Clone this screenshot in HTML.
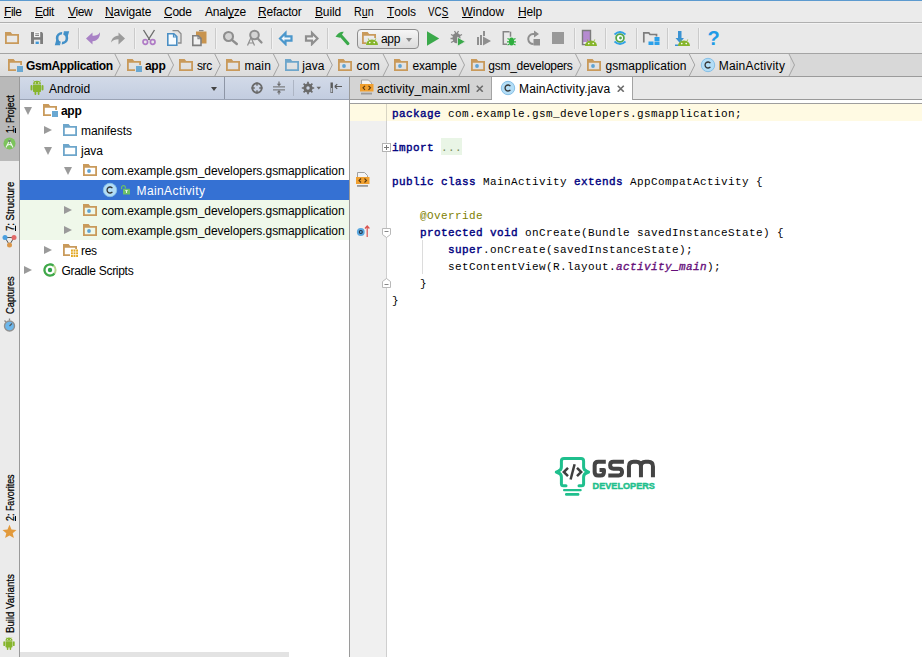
<!DOCTYPE html>
<html><head><meta charset="utf-8"><title>GsmApplication - Android Studio</title>
<style>
*{box-sizing:border-box;margin:0;padding:0}
html,body{width:922px;height:657px;overflow:hidden;background:#fff}
body{position:relative;font-family:"Liberation Sans",sans-serif;font-size:12px;color:#000}
.a{position:absolute}
.t{position:absolute;white-space:pre;line-height:14px;height:14px}
u{text-decoration:none;border-bottom:1px solid #000;display:inline-block;line-height:12px;height:12px}
#menubar{left:0;top:0;width:922px;height:23px;background:#ebebeb;border-top:1px solid #5c9acf;border-bottom:1px solid #b0b0b0}
#toolbar{left:0;top:23px;width:922px;height:31px;background:#e9e9e9;border-top:1px solid #f3f3f3;border-bottom:1px solid #a4a4a4}
.sep{position:absolute;top:28px;width:1px;height:21px;background:#cbcbcb;box-shadow:1px 0 0 #f2f2f2}
#navbar{left:0;top:54px;width:922px;height:23px;background:#d8d8d8;border-bottom:1px solid #9b9b9b}
#crumbs{left:0;top:0;width:790px;height:22px;background:linear-gradient(#e8e8e8,#dcdcdc)}
#strip{left:0;top:77px;width:20px;height:580px;background:#ebebeb;border-right:1px solid #9a9a9a}
#strip .act{left:0;top:0;width:19px;height:84px;background:#b9b9b9}
.vt{position:absolute;white-space:pre;font-size:11px;line-height:12px;height:12px;transform-origin:0 0;color:#000;-webkit-text-stroke:0.25px #000}
#phead{left:20px;top:77px;width:329px;height:23px;background:linear-gradient(#d2dae8,#c3cde0);border-bottom:1px solid #9aa3b5}
#tree{left:20px;top:100px;width:329px;height:552px;background:#fff}
.row{position:absolute;left:0;width:329px;height:20px}
.tri-d{position:absolute;width:0;height:0;border-left:4.5px solid transparent;border-right:4.5px solid transparent;border-top:8px solid #9a9a9a}
.tri-r{position:absolute;width:0;height:0;border-top:4.5px solid transparent;border-bottom:4.5px solid transparent;border-left:8px solid #9a9a9a}
#hscroll{left:20px;top:652px;width:269px;height:5px;background:#e3e3e3}
#vsplit{left:349px;top:77px;width:1px;height:580px;background:#9a9a9a}
#tabs{left:350px;top:77px;width:572px;height:23px;background:#e8e8e8;border-bottom:1px solid #999}
#tab1{left:0;top:0;width:142px;height:22px;background:#d4d4d4;border-right:1px solid #a3a3a3}
#tab2{left:142px;top:0;width:141px;height:23px;background:#fff;border-right:1px solid #a3a3a3}
#editor{left:350px;top:100px;width:572px;height:557px;background:#fff}
#gutter{left:0;top:4px;width:37px;height:553px;background:#f0f0f0;border-right:1px solid #cfcfcf}
#topline{left:0;top:3px;width:572px;height:1px;background:#9e9e9e}
#curline{left:0;top:4px;width:572px;height:17px;background:#fffae3}
.cl{position:absolute;left:42px;height:17px;line-height:17px;margin-top:2px;white-space:pre;font-family:"Liberation Mono",monospace;font-size:11px;letter-spacing:0.4px;color:#000}
.k{color:#000080;-webkit-text-stroke:0.4px #000080}
.an{color:#808000}
.f{color:#660e7a;font-style:italic;-webkit-text-stroke:0.35px #660e7a}
</style></head><body>

<svg width="0" height="0" style="position:absolute">
<defs>
<symbol id="fold" viewBox="0 0 16 16"><path fill="#c99a5b" fill-rule="evenodd" d="M1 2h5.6l1.6 2H15v10H1zM2.8 5.8v6.4h10.4V5.8z"/></symbol>
<symbol id="foldblue" viewBox="0 0 16 16"><path fill="#6ea6cb" fill-rule="evenodd" d="M1 2h5.6l1.6 2H15v10H1zM2.8 5.8v6.4h10.4V5.8z"/></symbol>
<symbol id="foldmod" viewBox="0 0 16 16"><path fill="#c99a5b" fill-rule="evenodd" d="M1 2h5.6l1.6 2H15v4H13.2V5.800H2.8v6.400H9V14H1z"/><rect x="10" y="9" width="6" height="6" fill="#6aa8d2"/></symbol>
<symbol id="foldpkg" viewBox="0 0 16 16"><path fill="#c99a5b" fill-rule="evenodd" d="M1 2h5.6l1.6 2H15v10H1zM2.8 5.8v6.4h10.4V5.8z"/><circle cx="7" cy="9" r="1.9" fill="#5fa3d3"/></symbol>
<symbol id="foldres" viewBox="0 0 16 16"><path fill="#c99a5b" fill-rule="evenodd" d="M1 2h5.600l1.600 2H15v3H13.200V5.800H2.800v6.400H8V14H1z"/><path fill="#e3a820" d="M9 7.500h7V15H9z"/><path stroke="#fff" stroke-width=".7" d="M11.300 7.500V15M13.700 7.500V15M9 10h7M9 12.500h7" fill="none"/></symbol>
<symbol id="cicon" viewBox="0 0 16 16"><circle cx="8" cy="8" r="6.7" fill="#b3ddf6" stroke="#86bfe6" stroke-width="1"/><path d="M10.4 6.100A3 3 0 1 0 10.400 9.900" fill="none" stroke="#333" stroke-width="1.3"/></symbol>
<symbol id="lock" viewBox="0 0 10 12"><path d="M1.600 5.200V3.600a1.900 1.900 0 0 1 3.800 0V4.500" fill="none" stroke="#6cc069" stroke-width="1.200"/><rect x="3" y="4.800" width="7" height="5.700" rx=".6" fill="#6cc069"/><path d="M5.300 6.600h2.400M6.500 6.600v2.400" stroke="#eaf6e8" stroke-width="1"/></symbol>
<symbol id="xmlic" viewBox="0 0 14 16"><path d="M1.500 1h7l3 3v2H1.500z" fill="#f4f4f4" stroke="#a0a0a0"/><rect x="0" y="5" width="13.500" height="7.500" fill="#f0a030"/><path d="M5 6.800L3 8.800l2 2M8.500 6.800l2 2-2 2" fill="none" stroke="#5a3a10" stroke-width="1.100"/><rect x="1" y="13.700" width="11" height="1.800" fill="#9a9a9a"/></symbol>
<symbol id="droid" viewBox="0 0 16 16"><path fill="#86b52c" d="M4 6h8v6.200a.8.800 0 0 1-.8.800H10.500v2a.9.900 0 0 1-1.800 0v-2H7.300v2a.9.900 0 0 1-1.800 0v-2H4.800a.8.800 0 0 1-.8-.8zM1.500 7a1 1 0 0 1 2 0v3.500a1 1 0 0 1-2 0zM12.500 7a1 1 0 0 1 2 0v3.500a1 1 0 0 1-2 0zM4 5.500A4 3.700 0 0 1 12 5.500zM4.600 1.300l1.200 1.700-.4.300L4.200 1.600zM11.400 1.300l-1.200 1.700.4.300 1.200-1.700z"/><circle cx="6.300" cy="3.900" r=".55" fill="#fff"/><circle cx="9.700" cy="3.900" r=".55" fill="#fff"/></symbol>
<symbol id="droidhead" viewBox="0 0 12 7"><path fill="#86b52c" d="M0 7A6 5.600 0 0 1 12 7zM2.200.200l1.300 1.900-.5.300L1.700.500zM9.800.200L8.500 2.100l.5.300L10.300.500z"/><circle cx="3.800" cy="4.600" r=".8" fill="#fff"/><circle cx="8.200" cy="4.600" r=".8" fill="#fff"/></symbol>
</defs></svg>

<div id="menubar" class="a">
<div class="t" style="left:4px;top:4px;letter-spacing:-0.45px;"><u>F</u>ile</div>
<div class="t" style="left:35px;top:4px;letter-spacing:-0.45px;"><u>E</u>dit</div>
<div class="t" style="left:68px;top:4px;letter-spacing:-0.45px;"><u>V</u>iew</div>
<div class="t" style="left:105px;top:4px;letter-spacing:-0.15px;"><u>N</u>avigate</div>
<div class="t" style="left:164px;top:4px;letter-spacing:-0.25px;"><u>C</u>ode</div>
<div class="t" style="left:205px;top:4px;letter-spacing:-0.25px;">Anal<u>y</u>ze</div>
<div class="t" style="left:258px;top:4px;letter-spacing:-0.22px;"><u>R</u>efactor</div>
<div class="t" style="left:315px;top:4px;letter-spacing:-0.15px;"><u>B</u>uild</div>
<div class="t" style="left:354px;top:4px;transform-origin:0 0;transform:scaleX(0.891);">R<u>u</u>n</div>
<div class="t" style="left:387px;top:4px;letter-spacing:-0.1px;"><u>T</u>ools</div>
<div class="t" style="left:428px;top:4px;transform-origin:0 0;transform:scaleX(0.818);">VC<u>S</u></div>
<div class="t" style="left:461.5px;top:4px;letter-spacing:0px;"><u>W</u>indow</div>
<div class="t" style="left:518px;top:4px;letter-spacing:-0.2px;"><u>H</u>elp</div>
</div>
<div id="toolbar" class="a"></div>
<div class="sep" style="left:78px"></div>
<div class="sep" style="left:134px"></div>
<div class="sep" style="left:215px"></div>
<div class="sep" style="left:271px"></div>
<div class="sep" style="left:327px"></div>
<div class="sep" style="left:574px"></div>
<div class="sep" style="left:605px"></div>
<div class="sep" style="left:636px"></div>
<div class="sep" style="left:667px"></div>
<div class="sep" style="left:698px"></div>
<svg class="a" style="left:4px;top:30px" width="16" height="16"><use href="#fold"/></svg>
<svg class="a" style="left:30px;top:30px" width="16" height="16" viewBox="0 0 16 16"><path fill="#7d7d7d" d="M1 2h10.800l1.200 1.200V14H1z"/><rect x="4" y="2" width="6.200" height="5.200" fill="#f6f6f6"/><path stroke="#777" d="M5.200 3.800h3.800M5.200 5.500h3.800" fill="none" stroke-width=".9"/><rect x="4" y="9.700" width="6.200" height="4.300" fill="#e9e9e9"/><rect x="5.600" y="11.600" width="3.200" height="2.400" fill="#3f97d6"/></svg>
<svg class="a" style="left:54px;top:30px" width="16" height="16" viewBox="0 0 16 16"><circle cx="8" cy="8.200" r="4.900" fill="none" stroke="#4290c8" stroke-width="2.600"/><path fill="#4290c8" d="M9 1.200h6.200L13.600 6.800zM7 15.200H.8L2.400 9.600z"/><path d="M9.300 0L6.700 16.400" stroke="#e9e9e9" stroke-width="1.400"/></svg>
<svg class="a" style="left:85px;top:30px" width="16" height="16" viewBox="0 0 16 16"><path fill="#a982c6" d="M1 8.500L7.500 2.500v3.300c4 0 7 -1.500 7.500 -3.800c.5 5 -2.500 9 -7.500 9.200v3.300z"/></svg>
<svg class="a" style="left:110px;top:30px" width="16" height="16" viewBox="0 0 16 16"><path fill="#9b9b9b" d="M15 8.500L8.500 2.500v3.300c-4 0-6.500 2.200-7.500 6.700c1.800-2.400 4-3.300 7.500-3.300v5.300z"/></svg>
<svg class="a" style="left:141px;top:29px" width="16" height="17" viewBox="0 0 16 17"><path d="M2.500 1L8.800 11M13.500 1L7.200 11" stroke="#6e6e6e" stroke-width="1.400" fill="none"/><circle cx="4.300" cy="13" r="2.300" fill="none" stroke="#b07cc6" stroke-width="1.700"/><circle cx="11.700" cy="13" r="2.300" fill="none" stroke="#b07cc6" stroke-width="1.700"/></svg>
<svg class="a" style="left:166px;top:29px" width="16" height="18" viewBox="0 0 16 18"><path d="M6.500 1.700h5.500l3 3V14h-3" fill="#e4e4e4" stroke="#8d8d8d" stroke-width="1.300"/><path d="M1.800 4.700h6l3 3V16.300h-9z" fill="#f6fbff" stroke="#4b8fc4" stroke-width="1.600"/><path d="M7.500 4.700v3.300h3.300" fill="none" stroke="#4b8fc4" stroke-width="1.200"/></svg>
<svg class="a" style="left:191px;top:29px" width="17" height="18" viewBox="0 0 17 18"><path fill="#c8944f" d="M5 2.500h10.500v12H5z"/><rect x="8" y="1" width="4.500" height="1.200" fill="#8a8a8a"/><path d="M1.800 6.700h5.500l2.700 2.700v7H1.800z" fill="#f2f2f2" stroke="#7f7f7f" stroke-width="1.600"/><path d="M7 6.700v3h3" fill="none" stroke="#7f7f7f" stroke-width="1.100"/></svg>
<svg class="a" style="left:222px;top:30px" width="17" height="16" viewBox="0 0 17 16"><circle cx="6.500" cy="6.500" r="4.500" fill="#d4d4d4" stroke="#8e8e8e" stroke-width="2.100"/><path d="M9.800 9.800L14.800 14" stroke="#8e8e8e" stroke-width="2.400" stroke-linecap="round"/></svg>
<svg class="a" style="left:246px;top:29px" width="18" height="18" viewBox="0 0 18 18"><circle cx="8.500" cy="6" r="4.300" fill="#d4d4d4" stroke="#8e8e8e" stroke-width="2"/><path d="M11.500 9.300L15.500 13.500" stroke="#8e8e8e" stroke-width="2.300" stroke-linecap="round"/><path d="M1.500 16.500L5 8.500l3.500 8M2.800 14h4.400" fill="none" stroke="#8e8e8e" stroke-width="1.200"/></svg>
<svg class="a" style="left:278px;top:30px" width="16" height="16" viewBox="0 0 16 16"><path d="M2 8.500L7.500 3v3.300h6v4.400h-6V14z" fill="#f2f7fb" stroke="#4b97cc" stroke-width="2.200" stroke-linejoin="miter"/></svg>
<svg class="a" style="left:303px;top:30px" width="16" height="16" viewBox="0 0 16 16"><path d="M14.500 8.500L9 3v3.300H3v4.400h6V14z" fill="#f2f2f2" stroke="#8f8f8f" stroke-width="2.200"/></svg>
<svg class="a" style="left:334px;top:30px" width="16" height="16" viewBox="0 0 16 16"><path d="M6.300 5L13.800 13.500" stroke="#3aa94a" stroke-width="3.200" stroke-linecap="round"/><path d="M1.500 6.800C3.500 3.500 6.500 1.500 9.800 1.800L6 7.800z" fill="#3aa94a"/></svg>
<div class="a" style="left:357px;top:29px;width:62px;height:20px;border:1px solid #8e8e8e;border-radius:4px;background:linear-gradient(#f6f6f6,#dcdcdc)"></div>
<svg class="a" style="left:361px;top:30px" width="16" height="16" viewBox="0 0 16 16"><path fill="#c99a5b" fill-rule="evenodd" d="M1 2h5.600l1.600 2H15v4H13.2V5.800H2.800v6.400H5V14H1z"/></svg>
<svg class="a" style="left:366px;top:38px" width="12" height="7"><use href="#droidhead"/></svg>
<div class="t" style="left:381px;top:32px;letter-spacing:-0.3px">app</div>
<div class="a" style="left:406px;top:38px;width:0;height:0;border-left:3.500px solid transparent;border-right:3.500px solid transparent;border-top:4.500px solid #8a8a8a"></div>
<svg class="a" style="left:426px;top:30px" width="16" height="17" viewBox="0 0 16 17"><path fill="#3aa94a" d="M1 1.300L13.200 8.500 1 15.800z"/></svg>
<svg class="a" style="left:450px;top:30px" width="16" height="17" viewBox="0 0 16 17"><ellipse cx="6.500" cy="8" rx="4" ry="5.200" fill="#858585"/><path d="M1 4.500l3 1.500M12 4.500L9 6M.5 8.500h3M1 12.500l3-1.500M4.500 1l1.500 2.500M8.500 1L7 3.500" stroke="#858585" stroke-width="1.300" fill="none"/><path fill="#3aa94a" stroke="#e9e9e9" stroke-width=".8" d="M7.500 7.200L15.300 11.700 7.500 16.200z"/></svg>
<svg class="a" style="left:476px;top:30px" width="16" height="16" viewBox="0 0 16 16"><path fill="#8f8f8f" d="M1 7h2v8H1zM4 5h2v10H4zM7 1h2v5H7zM7 6.500L15 11 7 15.500z"/></svg>
<svg class="a" style="left:501px;top:30px" width="16" height="17" viewBox="0 0 16 17"><path d="M8.500 1.700H2.300v12.600H6" fill="none" stroke="#858585" stroke-width="1.500"/><path d="M9.500 1.700v5" stroke="#858585" stroke-width="1.500"/><ellipse cx="10.500" cy="11.500" rx="2.600" ry="4" fill="#2fae3f"/><path d="M6.500 8.500l2 1M14.500 8.500l-2 1M6 11.800h9M6.500 15l2-1M14.500 15l-2-1" stroke="#2fae3f" stroke-width="1.200"/></svg>
<svg class="a" style="left:525px;top:30px" width="16" height="17" viewBox="0 0 16 17"><path d="M8.500 14A5 5 0 1 1 8 4h2" fill="none" stroke="#8f8f8f" stroke-width="2"/><path fill="#8f8f8f" d="M9 .5L14 4 9 7.500zM8.500 9h6.500v6.500H8.500z"/></svg>
<div class="a" style="left:552px;top:32px;width:12px;height:12px;background:#999"></div>
<svg class="a" style="left:581px;top:29px" width="17" height="18" viewBox="0 0 17 18"><path d="M1.500 1.500h8v14h-8z" fill="#b58bd0" stroke="#7c7c7c" stroke-width="1.400"/><rect x="2.500" y="13" width="6" height="2" fill="#e8e8e8"/></svg>
<svg class="a" style="left:585px;top:39px" width="12" height="7"><use href="#droidhead"/></svg>
<svg class="a" style="left:612px;top:30px" width="16" height="16" viewBox="0 0 16 16"><circle cx="8" cy="8" r="3.900" fill="#fff" stroke="#56a84b" stroke-width="1.800"/><circle cx="8.500" cy="8" r="1.400" fill="#56a84b"/><path d="M2.500 4.500Q8 -.5 13.500 4.500M2.500 11.500Q8 16.500 13.500 11.500" fill="none" stroke="#30a3e6" stroke-width="1.700"/></svg>
<svg class="a" style="left:642px;top:30px" width="19" height="16" viewBox="0 0 19 16"><path d="M1.800 12.500V2.800h5l1.200 1.700h6.500v2" fill="none" stroke="#7d7d7d" stroke-width="1.700"/><path fill="#2aa0ea" d="M12.500 7h5v4h-5zM6.500 11.500h5v3.500h-5zM12.500 11.500h5v3.500h-5z"/></svg>
<svg class="a" style="left:674px;top:30px" width="16" height="17" viewBox="0 0 16 17"><path fill="#3b93d3" d="M4 1h3.500v7H10L5.800 13 1.500 8H4zM1 14.500h5v1.500H1z"/></svg>
<svg class="a" style="left:678px;top:39px" width="12" height="7"><use href="#droidhead"/></svg>
<div class="a" style="left:706px;top:27px;width:15px;height:22px;font:bold 20px/22px 'Liberation Sans',sans-serif;color:#1f9be6;text-align:center">?</div>

<div id="navbar" class="a"><div id="crumbs" class="a"></div>
<svg class="a" style="left:7px;top:3px" width="16" height="16"><use href="#foldmod"/></svg>
<div class="t" style="left:26px;top:5px;letter-spacing:-0.38px;font-weight:bold;">GsmApplication</div>
<svg class="a" style="left:126px;top:3px" width="16" height="16"><use href="#foldmod"/></svg>
<div class="t" style="left:145px;top:5px;letter-spacing:-0.3px;font-weight:bold;">app</div>
<svg class="a" style="left:178px;top:3px" width="16" height="16"><use href="#fold"/></svg>
<div class="t" style="left:197px;top:5px;letter-spacing:-0.4px;">src</div>
<svg class="a" style="left:225px;top:3px" width="16" height="16"><use href="#fold"/></svg>
<div class="t" style="left:244.4px;top:5px;letter-spacing:0.15px;">main</div>
<svg class="a" style="left:284px;top:3px" width="16" height="16"><use href="#foldblue"/></svg>
<div class="t" style="left:302.3px;top:5px;letter-spacing:0px;">java</div>
<svg class="a" style="left:337px;top:3px" width="16" height="16"><use href="#foldpkg"/></svg>
<div class="t" style="left:356.5px;top:5px;letter-spacing:0.25px;">com</div>
<svg class="a" style="left:393px;top:3px" width="16" height="16"><use href="#foldpkg"/></svg>
<div class="t" style="left:412.4px;top:5px;letter-spacing:-0.15px;">example</div>
<svg class="a" style="left:469.5px;top:3px" width="16" height="16"><use href="#foldpkg"/></svg>
<div class="t" style="left:488.3px;top:5px;letter-spacing:-0.27px;">gsm_developers</div>
<svg class="a" style="left:586px;top:3px" width="16" height="16"><use href="#foldpkg"/></svg>
<div class="t" style="left:605.4px;top:5px;letter-spacing:0.08px;">gsmapplication</div>
<svg class="a" style="left:700px;top:3px" width="16" height="16"><use href="#cicon"/></svg>
<div class="t" style="left:718.7px;top:5px;letter-spacing:0.2px;">MainActivity</div>
<svg class="a" style="left:0;top:0" width="800" height="22"><path d="M114.9 0L120.4 11L114.9 22M168.0 0L173.5 11L168.0 22M214.8 0L220.3 11L214.8 22M273.4 0L278.9 11L273.4 22M326.8 0L332.3 11L326.8 22M383.1 0L388.6 11L383.1 22M459.0 0L464.5 11L459.0 22M575.5 0L581 11L575.5 22M689.3 0L694.8 11L689.3 22M789.0 0L794.5 11L789.0 22" fill="none" stroke="#a4a4a4" stroke-width="1"/></svg>
</div>
<div id="strip" class="a"><div class="act a"></div>
<div class="vt" style="left:4px;top:56px;transform:rotate(-90deg) scaleX(0.81)"><u style="border:0;text-decoration:underline">1</u>: Project</div>
<div class="vt" style="left:4px;top:154px;transform:rotate(-90deg) scaleX(0.866)"><u style="border:0;text-decoration:underline">7</u>: Structure</div>
<div class="vt" style="left:4px;top:237px;transform:rotate(-90deg) scaleX(0.846)">Captures</div>
<div class="vt" style="left:4px;top:444px;transform:rotate(-90deg) scaleX(0.81)"><u style="border:0;text-decoration:underline">2</u>: Favorites</div>
<div class="vt" style="left:4px;top:555.500px;transform:rotate(-90deg) scaleX(0.876)">Build Variants</div>
<svg class="a" style="left:3px;top:60px" width="13" height="13" viewBox="0 0 13 13"><circle cx="6.500" cy="6.500" r="6" fill="#7cc35c"/><path d="M3 10.500L6.500 3.500 10 10.500M4.300 8.300Q6.500 6.800 8.700 8.300" fill="none" stroke="#f0f4ee" stroke-width="1.100"/><circle cx="6.500" cy="4" r="1.300" fill="#6f7f74"/></svg>
<svg class="a" style="left:2px;top:157px" width="15" height="14" viewBox="0 0 15 14"><path d="M3 3.500h9L7.500 11z" fill="none" stroke="#555" stroke-width="1"/><circle cx="3" cy="3.500" r="2.500" fill="#4b9fe0"/><circle cx="12" cy="3.500" r="2.500" fill="#e26a6a"/><circle cx="7.500" cy="11" r="2.500" fill="#d9964a"/></svg>
<svg class="a" style="left:3px;top:241px" width="13" height="14" viewBox="0 0 13 14"><path d="M1.500 2.500l1.500 1.500M6.500 .5v2" stroke="#8a8a8a" stroke-width="1.300"/><circle cx="6.500" cy="8" r="5" fill="#6cb7ec" stroke="#909090" stroke-width="1.400"/><path d="M6.500 8L9 5.500" stroke="#555" stroke-width="1.100"/></svg>
<svg class="a" style="left:2px;top:447px" width="15" height="15" viewBox="0 0 15 15"><path fill="#e29a3c" d="M7.500 .8l2 4.700 5 .4-3.800 3.300 1.200 4.900-4.400-2.700-4.400 2.700 1.200-4.900L.5 5.900l5-.4z"/></svg>
<svg class="a" style="left:2px;top:559px" width="14" height="14"><use href="#droid"/></svg>
</div>

<div id="phead" class="a">
<svg class="a" style="left:9px;top:2px" width="16" height="16"><use href="#droid"/></svg>
<div class="t" style="left:29px;top:5px;letter-spacing:-0.05px">Android</div>
<div class="a" style="left:191px;top:10px;width:0;height:0;border-left:3.500px solid transparent;border-right:3.500px solid transparent;border-top:4px solid #444"></div>
<div class="a" style="left:204px;top:0;width:1px;height:22px;background:#8e96a6"></div>
<svg class="a" style="left:230px;top:4px" width="14" height="14" viewBox="0 0 14 14"><circle cx="7" cy="7" r="4.700" fill="none" stroke="#6a6a6a" stroke-width="1.900"/><path d="M7 1.500v3.300M7 9.200v3.300M1.500 7h3.300M9.200 7h3.300" stroke="#6a6a6a" stroke-width="1.400"/></svg>
<svg class="a" style="left:252px;top:4px" width="14" height="14" viewBox="0 0 14 14"><path d="M1 5.900h12M1 8.900h12" stroke="#6a6a6a" stroke-width="1"/><path d="M7 .5v3.500M7 13.500V10.500" stroke="#6a6a6a" stroke-width="1.100"/><path fill="#6a6a6a" d="M4.800 2.800h4.400L7 5.200zM4.800 11.400h4.400L7 9z"/></svg>
<div class="a" style="left:273px;top:3px;width:1px;height:16px;background:#adb5c4"></div>
<svg class="a" style="left:281px;top:4px" width="22" height="14" viewBox="0 0 22 14"><circle cx="7" cy="7" r="3.300" fill="none" stroke="#6a6a6a" stroke-width="2.600"/><path d="M7 .8v12.400M.8 7h12.400M2.600 2.600l8.800 8.800M11.400 2.600l-8.800 8.800" stroke="#6a6a6a" stroke-width="1.700"/><circle cx="7" cy="7" r="1.700" fill="#cbd4e4"/><path fill="#6a6a6a" d="M15.500 5.800h4.500l-2.250 2.700z"/></svg>
<svg class="a" style="left:309px;top:3px" width="14" height="14" viewBox="0 0 14 14"><rect x="1.500" y="2.500" width="2.400" height="10.500" fill="#5a5a5a"/><rect x="2.200" y="8" width="1" height="4.300" fill="#d8dfeb"/><path d="M5.800 6.500h7.200M5.800 6.500l2.400-2.400M5.800 6.500l2.400 2.400" stroke="#5a5a5a" stroke-width="1.200" fill="none"/></svg>
</div>
<div id="tree" class="a">
<div class="row" style="top:80px;background:#3571d3"></div>
<div class="row" style="top:100px;height:40px;background:#eff8ea"></div>
<div class="tri-d" style="left:3.500px;top:7px"></div>
<svg class="a" style="left:22px;top:2px" width="16" height="16"><use href="#foldmod"/></svg>
<div class="t" style="left:41px;top:4px;font-weight:bold;letter-spacing:-0.3px">app</div>
<div class="tri-r" style="left:24px;top:26px"></div>
<svg class="a" style="left:42px;top:22px" width="16" height="16"><use href="#foldblue"/></svg>
<div class="t" style="left:61px;top:24px;letter-spacing:-0.05px">manifests</div>
<div class="tri-d" style="left:23.500px;top:47px"></div>
<svg class="a" style="left:42px;top:42px" width="16" height="16"><use href="#foldblue"/></svg>
<div class="t" style="left:61px;top:44px;letter-spacing:0px">java</div>
<div class="tri-d" style="left:43.500px;top:67px"></div>
<svg class="a" style="left:62px;top:62px" width="16" height="16"><use href="#foldpkg"/></svg>
<div class="t" style="left:81.500px;top:64px;letter-spacing:-0.075px">com.example.gsm_developers.gsmapplication</div>
<svg class="a" style="left:82px;top:82px" width="16" height="16"><use href="#cicon"/></svg>
<svg class="a" style="left:100px;top:84px" width="10" height="12"><use href="#lock"/></svg>
<div class="t" style="left:116.500px;top:84px;color:#fff;letter-spacing:0.4px">MainActivity</div>
<div class="tri-r" style="left:44px;top:106px"></div>
<svg class="a" style="left:62px;top:102px" width="16" height="16"><use href="#foldpkg"/></svg>
<div class="t" style="left:81.500px;top:104px;letter-spacing:-0.075px">com.example.gsm_developers.gsmapplication</div>
<div class="tri-r" style="left:44px;top:126px"></div>
<svg class="a" style="left:62px;top:122px" width="16" height="16"><use href="#foldpkg"/></svg>
<div class="t" style="left:81.500px;top:124px;letter-spacing:-0.075px">com.example.gsm_developers.gsmapplication</div>
<div class="tri-r" style="left:24px;top:146px"></div>
<svg class="a" style="left:42px;top:142px" width="16" height="16"><use href="#foldres"/></svg>
<div class="t" style="left:61px;top:144px;letter-spacing:-0.3px">res</div>
<div class="tri-r" style="left:4px;top:166px"></div>
<svg class="a" style="left:22px;top:162px" width="16" height="16" viewBox="0 0 16 16"><circle cx="8" cy="8" r="5.600" fill="none" stroke="#b5d68f" stroke-width="2"/><path d="M12.400 11.500A5.600 5.600 0 1 1 11.500 3.600" fill="none" stroke="#3ea84c" stroke-width="2.100"/><circle cx="8" cy="8" r="2.200" fill="#2fa24a"/></svg>
<div class="t" style="left:41.500px;top:164px;letter-spacing:-0.3px">Gradle Scripts</div>
</div>
<div id="hscroll" class="a"></div>
<div id="vsplit" class="a"></div>

<div id="tabs" class="a">
<div id="tab1" class="a"></div><div id="tab2" class="a"></div>
<svg class="a" style="left:10px;top:2px" width="14" height="16"><use href="#xmlic"/></svg>
<div class="t" style="left:27px;top:5px;letter-spacing:0.1px">activity_main.xml</div>
<svg class="a" style="left:126px;top:7.500px" width="7.500" height="7.500" viewBox="0 0 8 8"><path d="M.8.800l6.400 6.400M7.200.800L.8 7.200" stroke="#6b6b6b" stroke-width="1.700"/></svg>
<svg class="a" style="left:150px;top:3px" width="16" height="16"><use href="#cicon"/></svg>
<div class="t" style="left:169px;top:5px;letter-spacing:0.17px">MainActivity.java</div>
<svg class="a" style="left:267px;top:7.500px" width="7.500" height="7.500" viewBox="0 0 8 8"><path d="M.8.800l6.400 6.400M7.200.800L.8 7.200" stroke="#6b6b6b" stroke-width="1.700"/></svg>
</div>
<div id="editor" class="a">
<div id="topline" class="a"></div>
<div id="gutter" class="a"></div>
<div id="curline" class="a"></div>
<div class="a" style="left:36px;top:4px;width:1px;height:17px;background:#d9d5c4"></div>
<div class="cl" style="top:4px"><span class="k">package</span> com.example.gsm_developers.gsmapplication;</div>
<div class="a" style="left:91px;top:38px;width:21px;height:17px;background:#e9f5e6"></div>
<div class="cl" style="top:38px"><span class="k">import</span> <span style="color:#7a8a5a">...</span></div>
<div class="cl" style="top:72px"><span class="k">public class</span> MainActivity <span class="k">extends</span> AppCompatActivity {</div>
<div class="cl" style="top:106px">    <span class="an">@Override</span></div>
<div class="cl" style="top:123px">    <span class="k">protected void</span> onCreate(Bundle savedInstanceState) {</div>
<div class="cl" style="top:140px">        <span class="k">super</span>.onCreate(savedInstanceState);</div>
<div class="cl" style="top:157px">        setContentView(R.layout.<span class="f">activity_main</span>);</div>
<div class="cl" style="top:174px">    }</div>
<div class="cl" style="top:191px">}</div>
<div class="a" style="left:72px;top:140px;width:1px;height:34px;background:#dcdcdc"></div>
<!-- fold + -->
<div class="a" style="left:32px;top:43px;width:9px;height:9px;background:#fff;border:1px solid #b3b3b3"></div>
<div class="a" style="left:34px;top:47px;width:5px;height:1px;background:#777"></div>
<div class="a" style="left:36px;top:45px;width:1px;height:5px;background:#777"></div>
<!-- fold markers -->
<svg class="a" style="left:32px;top:128px" width="9" height="60" viewBox="0 0 9 60"><path d="M4.500 9v42" stroke="#cfcfcf" stroke-width="1"/><path d="M.5.500h8v6L4.500 9.500.5 6.500z" fill="#fff" stroke="#b9b9b9"/><path d="M2.500 3.500h4" stroke="#888"/><path d="M.5 59.500h8v-6L4.500 50.500.5 53.500z" fill="#fff" stroke="#b9b9b9"/><path d="M2.500 56.500h4" stroke="#888"/></svg>
<!-- gutter icons -->
<svg class="a" style="left:6px;top:72px" width="14" height="15" viewBox="0 0 14 15"><path d="M1.500 .5h7l3 3v2H1.500z" fill="#f4f4f4" stroke="#a0a0a0"/><rect x="0" y="5" width="13.500" height="7" fill="#f0a030"/><path d="M5 6.500L3 8.500l2 2M8.500 6.500l2 2-2 2" fill="none" stroke="#5a3a10" stroke-width="1.100"/><rect x="1" y="13" width="11" height="1.800" fill="#9a9a9a"/></svg>
<svg class="a" style="left:6px;top:124px" width="14" height="14" viewBox="0 0 14 14"><circle cx="4.800" cy="8" r="3.900" fill="#5aa7df"/><circle cx="4.800" cy="8" r="1.500" fill="none" stroke="#234" stroke-width="1.100"/><path d="M11.200 13V2.500M9 4.500l2.200-2.500 2.200 2.500" fill="none" stroke="#d9534f" stroke-width="1.200"/></svg>
<!-- logo -->
<svg class="a" style="left:200px;top:350px" width="115" height="55" viewBox="0 0 115 55">
<g fill="none" stroke="#1fbf8d" stroke-width="3" stroke-linecap="round" stroke-linejoin="round">
<path d="M16 35.800H13.400Q11.400 35.800 11.400 33.800V27Q11.400 24 8.500 23L6.300 22.100 8.500 21Q11.400 20 11.400 17V11Q11.400 8.500 14 8.500H31Q33.600 8.500 33.600 11V17Q33.600 20 36.500 21L38.600 22.100 36.500 23Q33.600 24 33.600 27V33.800Q33.600 35.800 31.600 35.800H29"/>
</g>
<rect x="13" y="38.900" width="18.700" height="2.300" rx="1" fill="#1fbf8d"/>
<rect x="15" y="43.100" width="14.400" height="2.700" rx="1.200" fill="#1fbf8d"/>
<g fill="none" stroke="#3f3f3f" stroke-width="2.500" stroke-linecap="butt" stroke-linejoin="miter">
<path d="M18 17.800L13.800 22 18 26.200"/><path d="M24.600 14.300L20.600 29.500"/><path d="M27 17.800L31.200 22 27 26.200"/>
</g>
<g fill="none" stroke="#444" stroke-width="4" stroke-linecap="butt" stroke-linejoin="round">
<path d="M55.800 11.850H48.200Q44.650 11.850 44.650 15.400V21.900Q44.650 25.450 48.200 25.450H50.400Q53.950 25.450 53.950 21.900V20H49.500"/>
<path d="M73.900 11.850H63.500Q60.150 11.850 60.150 15.250Q60.150 18.650 63.500 18.650H68.700Q72.050 18.650 72.050 22.050Q72.050 25.450 68.700 25.450H58.300"/>
<path d="M78.950 27.300V16.400Q78.950 11.850 83.500 11.850H86.400Q90.950 11.850 90.950 16.400V27.300M90.950 16.400Q90.950 11.850 95.500 11.850H98.400Q102.950 11.850 102.950 16.400V27.300"/>
</g>
<text x="42.600" y="38.900" font-family="Liberation Sans, sans-serif" font-weight="bold" font-size="9" fill="#1fbf8d" textLength="62.300" lengthAdjust="spacingAndGlyphs" stroke="#1fbf8d" stroke-width=".45" stroke-linejoin="round">DEVELOPERS</text>
</svg>
</div>

</body></html>
